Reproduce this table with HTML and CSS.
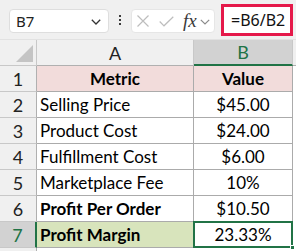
FILE: index.html
```html
<!DOCTYPE html>
<html>
<head>
<meta charset="utf-8">
<link rel="stylesheet" href="styles.css">
</head>
<body>
<div class="app">
  <div class="toolbar">
    <div class="namebox">
      <span class="nb-text">B7</span>
      <svg class="nb-chev" width="10" height="6" viewBox="0 0 10 6"><polyline points="0.8,0.8 5,5 9.2,0.8" fill="none" stroke="#333" stroke-width="1.3"/></svg>
    </div>
    <div class="dots"><i></i><i></i><i></i></div>
    <div class="fxbox">
      <svg class="ic-x" width="12" height="12" viewBox="0 0 12 12"><path d="M0.5 0.5 L11.5 11.5 M11.5 0.5 L0.5 11.5" stroke="#bdbdbd" stroke-width="1.2" fill="none"/></svg>
      <svg class="ic-check" width="15" height="11" viewBox="0 0 15 11"><polyline points="0.7,5.5 5,9.8 14.3,0.7" fill="none" stroke="#bdbdbd" stroke-width="1.2"/></svg>
      <span class="fx">fx</span>
      <svg class="ic-chev" width="10" height="6" viewBox="0 0 10 6"><polyline points="0.8,0.8 5,5 9.2,0.8" fill="none" stroke="#8a8a8a" stroke-width="1.2"/></svg>
    </div>
    <div class="formula">=B6/B2</div>
  </div>
  <div class="sheet">
    <div class="corner"><span class="tri"></span></div>
    <div class="colhdr">A</div>
    <div class="colhdr sel">B</div>
    <div class="edge hdr"></div>

    <div class="rowhdr">1</div>
    <div class="cell num head bold">Metric</div>
    <div class="cell num head bold">Value</div>
    <div class="edge"></div>

    <div class="rowhdr">2</div>
    <div class="cell txt">Selling Price</div>
    <div class="cell num">$45.00</div>
    <div class="edge"></div>

    <div class="rowhdr">3</div>
    <div class="cell txt">Product Cost</div>
    <div class="cell num">$24.00</div>
    <div class="edge"></div>

    <div class="rowhdr">4</div>
    <div class="cell txt">Fulfillment Cost</div>
    <div class="cell num">$6.00</div>
    <div class="edge"></div>

    <div class="rowhdr">5</div>
    <div class="cell txt">Marketplace Fee</div>
    <div class="cell num">10%</div>
    <div class="edge"></div>

    <div class="rowhdr">6</div>
    <div class="cell txt bold">Profit Per Order</div>
    <div class="cell num">$10.50</div>
    <div class="edge"></div>

    <div class="rowhdr sel">7</div>
    <div class="cell txt bold green">Profit Margin</div>
    <div class="cell num active">23.33%<span class="selbox"></span><span class="handle"></span></div>
    <div class="edge"></div>

    <div class="rowhdr last"></div>
    <div class="blank"></div>
    <div class="blank"></div>
    <div class="blank"></div>
  </div>
</div>
</body>
</html>
```

FILE: styles.css
```css
* { box-sizing: border-box; }
html, body { margin: 0; padding: 0; background: #fff; }
.app { width: 296px; height: 251px; overflow: hidden; display: flex; flex-direction: column; }

.toolbar {
  height: 40px;
  flex: none;
  background: #f0f0f0;
  border-bottom: 1px solid #e2e2e2;
  display: flex;
  align-items: flex-start;
  padding-left: 9px;
  font-family: "Noto Sans", "Open Sans", sans-serif;
}
.namebox {
  margin-top: 9px;
  width: 100px;
  height: 24px;
  background: #fff;
  border: 1px solid #dedede;
  border-radius: 4px;
  display: flex;
  align-items: center;
  justify-content: space-between;
  padding: 0 7px 0 6px;
}
.nb-text { font-size: 15px; color: #222; }
.nb-chev { margin-top: 1px; }
.dots {
  width: 22px;
  height: 40px;
  display: flex;
  flex-direction: column;
  align-items: center;
  justify-content: center;
  gap: 2px;
}
.dots i { display: block; width: 2px; height: 2px; background: #3c3c3c; }
.fxbox {
  margin-top: 9px;
  width: 84px;
  height: 24px;
  background: #fff;
  border: 1px solid #e6e6e6;
  border-radius: 4px;
  display: flex;
  align-items: center;
  padding-left: 5px;
}
.ic-x { margin-right: 10px; }
.ic-check { margin-right: 9px; }
.fx {
  font-family: "Liberation Serif", serif;
  font-style: italic;
  font-size: 19px;
  color: #3a3a3a;
  line-height: 1;
  margin-right: 3px;
  margin-top: -2px;
}
.ic-chev { margin-top: 1px; }
.formula {
  margin-top: 4px;
  margin-left: 6px;
  width: 72px;
  height: 32px;
  background: #fff;
  border: 3px solid #e5194a;
  display: flex;
  align-items: center;
  padding-left: 7px;
  font-size: 16px;
  color: #111;
}

.sheet {
  flex: 1;
  display: grid;
  grid-template-columns: 37px 157px 99px 3px;
  grid-template-rows: 26px repeat(7, 26px) 1fr;
  font-family: "Lato", "Liberation Sans", sans-serif;
  font-size: 17px;
  color: #000;
}
.corner {
  background: #f0f0f0;
  border-right: 1px solid #c8c8c8;
  border-bottom: 1px solid #c8c8c8;
  position: relative;
}
.tri {
  position: absolute;
  right: 3px;
  bottom: 3px;
  width: 0;
  height: 0;
  border-left: 17px solid transparent;
  border-bottom: 17px solid #c4c4c4;
}
.colhdr {
  background: #f0f0f0;
  border-right: 1px solid #c8c8c8;
  border-bottom: 1px solid #b0b0b0;
  display: flex;
  align-items: center;
  justify-content: center;
  color: #222;
  font-size: 18px;
}
.colhdr.sel {
  background: #d2d2d2;
  border-bottom: 2px solid #217346;
  color: #217346;
}
.edge { background: #fff; }
.edge.hdr { background: #f0f0f0; border-bottom: 1px solid #b0b0b0; }
.rowhdr {
  background: #f0f0f0;
  border-right: 1px solid #b0b0b0;
  border-bottom: 1px solid #c8c8c8;
  display: flex;
  align-items: center;
  justify-content: center;
  color: #222;
  font-size: 18px;
}
.rowhdr.sel {
  background: #d2d2d2;
  border-right: 2px solid #217346;
  color: #217346;
}
.rowhdr.last { border-bottom: none; }
.cell {
  border-right: 1px solid #ababab;
  border-bottom: 1px solid #ababab;
  display: flex;
  align-items: center;
  white-space: nowrap;
  overflow: hidden;
}
.txt { padding-left: 3px; }
.num { justify-content: center; }
.bold { font-weight: 700; }
.head { background: #f2dcdb; }
.green { background: #d8e4bc; }
.active { position: relative; overflow: visible; }
.selbox {
  position: absolute;
  left: -1px;
  top: -1px;
  right: -1px;
  bottom: -1px;
  border: 2px solid #217346;
  pointer-events: none;
}
.handle {
  position: absolute;
  right: -3px;
  bottom: -3px;
  width: 5px;
  height: 5px;
  background: #217346;
  border: 1px solid #fff;
}
.blank { background: #fff; }
```
